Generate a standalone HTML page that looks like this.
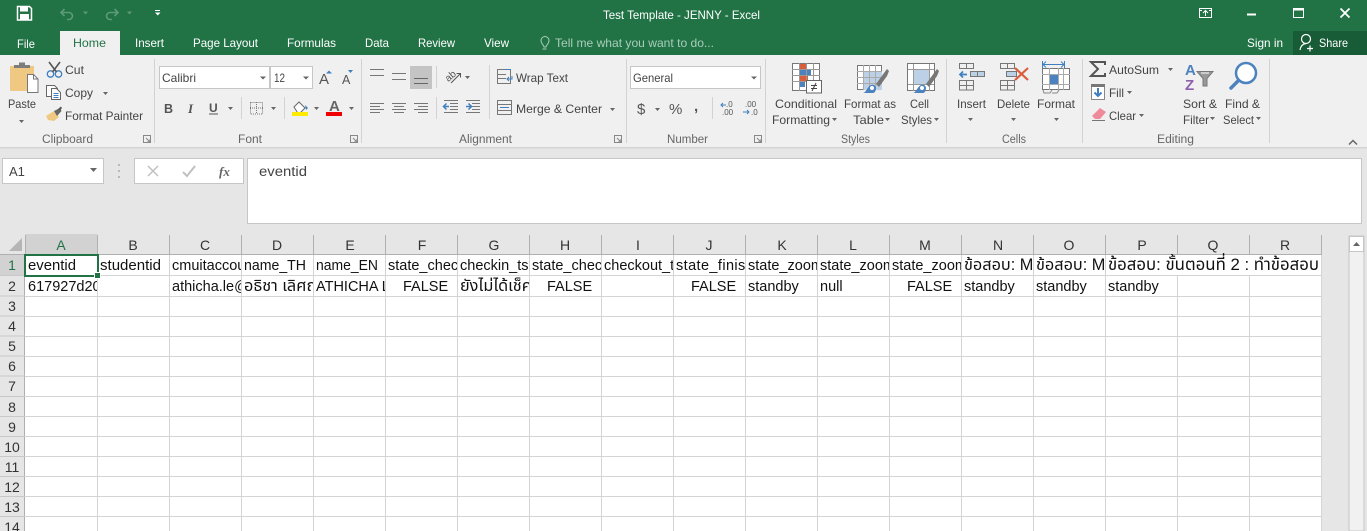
<!DOCTYPE html>
<html><head><meta charset="utf-8"><title>Test Template - JENNY - Excel</title>
<style>
html,body{margin:0;padding:0;width:1367px;height:531px;overflow:hidden;background:#fff}
svg{display:block}
text{font-family:"Liberation Sans","Noto Sans Thai","Noto Sans CJK SC","DejaVu Sans",sans-serif;font-size:12px;fill:#444}
.w text{fill:#fff}
.g text{fill:#666;font-size:11.5px}
.c text{fill:#111;font-size:14.5px}
.c text.t{font-size:16.3px}
.h text{fill:#333;font-size:14px}
.m{fill:#666}
.b{fill:none;stroke:#666;stroke-width:1}
.bl{fill:none;stroke:#888;stroke-width:1.5}
</style></head><body>
<svg width="1367" height="531" viewBox="0 0 1367 531" xmlns="http://www.w3.org/2000/svg">
<!-- backgrounds -->
<rect width="1367" height="531" fill="#e6e6e6"/>
<rect width="1367" height="55" fill="#217346"/>
<rect x="1293" y="31" width="74" height="24" fill="#185c37"/>
<rect x="60" y="31" width="60" height="24" fill="#f0f0f0"/>
<rect y="55" width="1367" height="92" fill="#f0f0f0"/>
<rect y="147" width="1367" height="1.5" fill="#d4d4d4"/>
<!-- title bar icons -->
<path d="M17.500 6.500h12l2 2v11.500h-14z" fill="none" stroke="#fff" stroke-width="1.500"/>
<rect x="20" y="7" width="8" height="4.500" fill="#fff"/><rect x="20" y="14" width="9" height="6" fill="#fff"/>
<path d="M61.500 12.500h7.500a3.500 3.500 0 0 1 0 7h-2M64.500 9l-3.500 3.500 3.500 3.500" fill="none" stroke="#5d9a78" stroke-width="1.600"/>
<path d="M117.500 12.500h-7.500a3.500 3.500 0 0 0 0 7h2M114.500 9l3.500 3.500-3.500 3.500" fill="none" stroke="#5d9a78" stroke-width="1.600"/>
<path d="M83 11.500h5l-2.500 3zM127 11.500h5l-2.500 3z" fill="#5d9a78"/>
<path d="M155 10h5v1h-5zM155 12.500h5.500l-2.750 3z" fill="#fff"/>
<rect x="1199.500" y="8.500" width="12" height="9" fill="none" stroke="#fff"/><path d="M1205.500 16v-5M1203 13l2.500-2.500 2.500 2.500M1200 10.500h2M1209 10.500h2" fill="none" stroke="#fff"/>
<rect x="1247" y="13.500" width="9" height="2" fill="#fff"/>
<rect x="1293.500" y="8.500" width="10" height="9" fill="none" stroke="#fff"/><rect x="1293" y="8" width="11" height="2.500" fill="#fff"/>
<path d="M1340.500 8.500l9 9M1349.500 8.500l-9 9" stroke="#fff" stroke-width="1.800"/>
<circle cx="1306" cy="39" r="4.500" fill="none" stroke="#fff" stroke-width="1.200"/><path d="M1300 50c.5-4 3-6 6-6.500M1307 48.500h6M1310 45.500v6" fill="none" stroke="#fff" stroke-width="1.200"/>
<!-- title text -->
<g class="w">
<text x="603" y="19" textLength="157" lengthAdjust="spacingAndGlyphs">Test Template - JENNY - Excel</text>
<text x="17" y="48" textLength="18" lengthAdjust="spacingAndGlyphs">File</text>
<text x="135" y="47" textLength="29" lengthAdjust="spacingAndGlyphs">Insert</text>
<text x="193" y="47" textLength="65" lengthAdjust="spacingAndGlyphs">Page Layout</text>
<text x="287" y="47" textLength="49" lengthAdjust="spacingAndGlyphs">Formulas</text>
<text x="365" y="47" textLength="24" lengthAdjust="spacingAndGlyphs">Data</text>
<text x="418" y="47" textLength="37" lengthAdjust="spacingAndGlyphs">Review</text>
<text x="484" y="47" textLength="25" lengthAdjust="spacingAndGlyphs">View</text>
<text x="1247" y="47" textLength="36" lengthAdjust="spacingAndGlyphs">Sign in</text>
<text x="1319" y="47" textLength="29" lengthAdjust="spacingAndGlyphs">Share</text>
</g>
<text x="73" y="47" textLength="33" lengthAdjust="spacingAndGlyphs" style="fill:#217346">Home</text>
<text x="555" y="47" textLength="159" lengthAdjust="spacingAndGlyphs" style="fill:#a9cdb8">Tell me what you want to do...</text>
<path d="M544 47c0-2-3-3-3-6.500a4 4 0 0 1 8 0c0 3.500-3 4.500-3 6.500zM542.500 49h4" fill="none" stroke="#a9cdb8"/>
<!-- group separators -->
<g fill="#d2d2d2"><rect x="154" y="59" width="1" height="84"/><rect x="361" y="59" width="1" height="84"/><rect x="626" y="59" width="1" height="84"/><rect x="765" y="59" width="1" height="84"/><rect x="946" y="59" width="1" height="84"/><rect x="1082" y="59" width="1" height="84"/><rect x="1269" y="59" width="1" height="84"/>
<rect x="241" y="97" width="1" height="22"/><rect x="284" y="97" width="1" height="22"/><rect x="436" y="66" width="1" height="22"/><rect x="436" y="97" width="1" height="22"/><rect x="489" y="65" width="1" height="54"/><rect x="712" y="97" width="1" height="22"/></g>
<!-- clipboard -->
<path d="M11 66h23v9h-7v16H11a1 1 0 0 1-1-1V67a1 1 0 0 1 1-1z" fill="#efc981"/>
<path d="M14 68v-3h5v-2.500h6V65h5v3z" fill="#7d7d7d"/>
<path d="M27.500 74.500h6l4.500 4.500v13.500H27.500z" fill="#fff" stroke="#777"/>
<path d="M33.500 74.500V79H38" fill="none" stroke="#777"/>
<path d="M19 120h5l-2.500 3z" class="m"/>
<circle cx="50.500" cy="74" r="3.200" fill="none" stroke="#3f7fbf" stroke-width="1.300"/><circle cx="58.500" cy="74" r="3.200" fill="none" stroke="#3f7fbf" stroke-width="1.300"/>
<path d="M49 62l7.500 10M60 62l-7.500 10" stroke="#555" stroke-width="1.600"/>
<path d="M46.500 85.500h8l3 3v8H46.500z" fill="#fff" stroke="#666"/>
<path d="M51.500 88.500h5l4 4v7h-9z" fill="#fff" stroke="#666"/>
<path d="M53.500 93.500h5M53.500 95.500h5M53.500 97.500h5" stroke="#3f7fbf"/>
<path d="M103 92h5l-2.500 3z" class="m"/>
<path d="M46 116l8-5 5 6-5 4-6-1z" fill="#efc981"/>
<path d="M54 111l6-3 1.500 3-4.500 5z" fill="#666"/><path d="M58 109l3-2.500 1 1.500-2 2.500z" fill="#555"/>
<!-- font -->
<rect x="159.500" y="66.500" width="110" height="22" fill="#fff" stroke="#c6c6c6"/>
<rect x="270.500" y="66.500" width="42" height="22" fill="#fff" stroke="#c6c6c6"/>
<path d="M260 76.500h6l-3 3zM303 76.500h6l-3 3z" class="m"/>
<text x="319" y="84" style="font-size:15px;fill:#555">A</text><path d="M326 73.500l3-3 3 3z" fill="#3f7fbf"/>
<text x="342" y="84" style="font-size:12.500px;fill:#555">A</text><path d="M348 70h5l-2.500 3z" fill="#3f7fbf"/>
<text x="164" y="113" style="font-weight:bold;font-size:12.500px;fill:#555">B</text>
<text x="188" y="113" style="font-style:italic;font-family:'Liberation Serif',serif;font-weight:bold;font-size:13px;fill:#555">I</text>
<text x="209" y="112" style="font-weight:bold;font-size:12px;fill:#555">U</text><rect x="209" y="113.500" width="9" height="1" fill="#555"/>
<path d="M228 107h5l-2.500 3zM271 107h5l-2.500 3zM314 107h5l-2.500 3zM349 107h5l-2.500 3z" class="m"/>
<rect x="250.500" y="102.500" width="12" height="11.500" fill="none" stroke="#777" stroke-dasharray="1 1"/><path d="M256.500 102v12M250 108h13" stroke="#777" stroke-dasharray="1 1"/>
<path d="M294 107l5-5 6 6-4.500 4.500h-3z" fill="#fff" stroke="#666"/><path d="M305 105l3 3-2 2z" fill="#3f7fbf"/>
<rect x="292" y="112" width="16" height="4" fill="#ffeb00"/>
<text x="329" y="111" style="font-size:15px;font-weight:bold;fill:#666">A</text>
<rect x="326" y="112" width="16" height="4" fill="#f00000"/>
<!-- alignment -->
<g stroke="#777" stroke-width="1" fill="none">
<path d="M370 69.500h14M370 75.500h14"/><path d="M392 73.500h14M392 79.500h14"/>
<path d="M370 103.500h14M370 106.500h10M370 109.500h14M370 112.500h10"/>
<path d="M392 103.500h14M394 106.500h10M392 109.500h14M394 112.500h10"/>
<path d="M414 103.500h14M418 106.500h10M414 109.500h14M418 112.500h10"/>
<path d="M444 100.500h14M450 103.500h8M450 106.500h8M450 109.500h8M444 112.500h14"/>
<path d="M466 100.500h14M472 103.500h8M472 106.500h8M472 109.500h8M466 112.500h14"/>
</g>
<rect x="410" y="66" width="22" height="23" fill="#c4c4c4"/>
<path d="M414 78.500h14M414 83.500h14" stroke="#666" fill="none"/>
<path d="M444 106.500h5M446.500 103.500l-3 3 3 3M466 106.500h5M468.500 103.500l3 3-3 3" fill="none" stroke="#3f7fbf" stroke-width="1.500"/>
<text x="446" y="80" transform="rotate(-40 450 78)" style="font-size:10px;fill:#555">ab</text>
<path d="M451 83l9-9M456.500 73.500h4v4" fill="none" stroke="#555"/>
<path d="M465 76h5l-2.500 3zM610 108h5l-2.500 3z" class="m"/>
<rect x="497.500" y="69.500" width="13" height="14" fill="none" stroke="#777"/><path d="M498 74.500h8M498 78.500h8" stroke="#777"/><path d="M505 69.500h6M512 76v3h-5M509 77l-2 2 2 2" fill="none" stroke="#3f7fbf"/>
<rect x="497.500" y="100.500" width="14" height="14" fill="none" stroke="#777"/><path d="M498 104.500h14M498 110.500h14" stroke="#777"/><path d="M500 107.500h9" stroke="#3f7fbf"/>
<!-- number -->
<rect x="630.500" y="66.500" width="130" height="22" fill="#fff" stroke="#c6c6c6"/>
<path d="M751 76.500h6l-3 3z" class="m"/>
<path d="M655 108h5l-2.500 3z" class="m"/>
<text x="637" y="114" style="font-size:15px;fill:#555">$</text>
<text x="669" y="114" style="font-size:15px;fill:#555">%</text>
<text x="694" y="111" style="font-size:15px;font-weight:bold;fill:#555">,</text>
<text x="726" y="107" style="font-size:8px;fill:#555">.0</text><text x="722" y="115" style="font-size:8px;fill:#555">.00</text>
<path d="M721 105h5M723 103l-2 2 2 2" fill="none" stroke="#3f7fbf"/>
<text x="745" y="107" style="font-size:8px;fill:#555">.00</text><text x="751" y="115" style="font-size:8px;fill:#555">.0</text>
<path d="M743 112h6M747 110l2 2-2 2" fill="none" stroke="#3f7fbf"/>
<!-- conditional formatting -->
<rect x="792.500" y="63.500" width="27" height="27" fill="#fff" stroke="#777"/>
<rect x="800" y="64" width="6" height="5" fill="#d95f3c"/><rect x="800" y="70" width="11" height="5" fill="#4c82bd"/><rect x="800" y="76" width="8" height="5" fill="#d95f3c"/><rect x="800" y="82" width="5" height="5" fill="#4c82bd"/>
<path d="M792 69.500h28M792 75.500h28M792 81.500h28M799.500 63v28M806.500 63v28M813.500 63v28" stroke="#999" fill="none"/>
<rect x="806.500" y="80.500" width="15" height="12.500" fill="#fff" stroke="#666"/>
<path d="M811 85.500h6M811 88.500h6M816 83l-4 8" stroke="#444" fill="none"/>
<!-- format as table -->
<rect x="857.500" y="65.500" width="24" height="24" fill="#fff" stroke="#777"/>
<rect x="863" y="71" width="19" height="19" fill="#bcd0e6"/>
<path d="M857 71.500h25M857 77.500h25M857 83.500h25M863.500 65v25M869.500 65v25M875.500 65v25" stroke="#aaa" fill="none"/>
<path d="M876 84l8-11 3-4 2 2-2 5-8 11z" fill="#777"/>
<path d="M863 93c3 0 4-6 8-8 3-1 5 1 5 3 0 2-1 5-3 5z" fill="#4c82bd"/><circle cx="872" cy="88" r="2" fill="#fff"/>
<!-- cell styles -->
<rect x="907.500" y="63.500" width="27" height="27" fill="#fff" stroke="#777"/>
<rect x="913" y="69" width="16" height="15" fill="#bcd0e6"/>
<path d="M908 69.500h26M908 84.500h26M913.500 64v27M929.500 64v27" stroke="#999" fill="none"/>
<path d="M926 84l8-11 3-4 2 2-2 5-8 11z" fill="#777"/>
<path d="M913 93c3 0 4-6 8-8 3-1 5 1 5 3 0 2-1 5-3 5z" fill="#4c82bd"/><circle cx="922" cy="88" r="2" fill="#fff"/>
<!-- insert -->
<g fill="none" stroke="#777"><rect x="959.500" y="63.500" width="14" height="5"/><path d="M966.500 63.500v5"/><rect x="959.500" y="80.500" width="14" height="9.500"/><path d="M959 85.500h15M966.500 80v10"/></g>
<rect x="970.500" y="71.500" width="14" height="5" fill="#bcd0e6" stroke="#777"/><path d="M977.500 71v6" stroke="#777"/>
<path d="M960 74.500h7M963 71.500l-3 3 3 3" fill="none" stroke="#3f7fbf" stroke-width="1.700"/>
<!-- delete -->
<g fill="none" stroke="#777"><rect x="1000.500" y="63.500" width="14" height="5"/><path d="M1007.500 63.500v5"/><rect x="1000.500" y="80.500" width="14" height="9.500"/><path d="M1000 85.500h15M1007.500 80v10"/></g>
<rect x="1006.500" y="71.500" width="10" height="5" fill="#bcd0e6" stroke="#777"/>
<path d="M1015 68l13 12M1028 68l-13 12" stroke="#d95f3c" stroke-width="2.200"/>
<!-- format -->
<path d="M1043 64.500h21M1046 61.500l-3 3 3 3M1061 61.500l3 3-3 3" fill="none" stroke="#3f7fbf"/><path d="M1042.500 61v7M1064.500 61v7" stroke="#3f7fbf"/>
<rect x="1042.500" y="68.500" width="27" height="21" fill="#fff" stroke="#777"/>
<rect x="1050" y="74" width="8" height="10" fill="#4c82bd"/>
<path d="M1042 74.500h28M1042 84.500h28M1049.500 68v22M1058.500 68v22M1063.500 68v22" stroke="#aaa" fill="none"/>
<path d="M1043 90l1 3h6l2-3M1052 93h5l2-3" stroke="#888" fill="none"/>
<path d="M968 118h5l-2.500 3zM1011 118h5l-2.500 3zM1054 118h5l-2.500 3zM832 118h5l-2.500 3zM885 118h5l-2.500 3zM934 118h5l-2.500 3z" class="m"/>
<!-- editing -->
<path d="M1105 65v-3h-14l7 7-7 7h14v-3" fill="none" stroke="#555" stroke-width="2"/>
<rect x="1091.500" y="84.500" width="13" height="15" fill="#fff" stroke="#888"/><rect x="1091" y="84" width="14" height="3" fill="#777"/>
<path d="M1098 88v8M1094.500 92.500l3.500 3.500 3.500-3.500" fill="none" stroke="#3f7fbf" stroke-width="2"/>
<path d="M1092 116l8-8 6 4-6 7h-5z" fill="#ee8a9a"/><path d="M1092 120.500h13" stroke="#777"/>
<path d="M1168 68h5l-2.500 3zM1127 91h5l-2.500 3zM1139 114h5l-2.500 3zM1210 117h5l-2.500 3zM1256 117h5l-2.500 3z" class="m"/>
<text x="1185" y="75" style="font-size:15px;font-weight:bold;fill:#4c82bd">A</text>
<text x="1185" y="90" style="font-size:15px;font-weight:bold;fill:#8f5fae">Z</text>
<path d="M1197 71.500h16l-6 7v7.500h-4v-7.500z" fill="#999" stroke="#777"/><path d="M1201 73h8" stroke="#fff"/>
<circle cx="1246" cy="73" r="10" fill="#fff" stroke="#4c82bd" stroke-width="2.500"/>
<path d="M1238.500 80.500l-7.500 7.500" stroke="#4c82bd" stroke-width="3.500" stroke-linecap="round"/>
<path d="M1349 144.500l4-4 4 4" fill="none" stroke="#666" stroke-width="1.500"/>
<!-- launchers -->
<g fill="none" stroke="#888"><path d="M143.500 135.500h7v7h-7z"/><path d="M146 138l4 4M150 139v3h-3"/><path d="M350.500 135.500h7v7h-7z"/><path d="M353 138l4 4M357 139v3h-3"/><path d="M614.500 135.500h7v7h-7z"/><path d="M617 138l4 4M621 139v3h-3"/><path d="M754.500 135.500h7v7h-7z"/><path d="M757 138l4 4M761 139v3h-3"/></g>
<!-- ribbon text -->
<text x="8" y="108" textLength="28" lengthAdjust="spacingAndGlyphs">Paste</text>
<text x="65" y="74" textLength="19" lengthAdjust="spacingAndGlyphs">Cut</text>
<text x="65" y="97" textLength="28" lengthAdjust="spacingAndGlyphs">Copy</text>
<text x="65" y="120" textLength="78" lengthAdjust="spacingAndGlyphs">Format Painter</text>
<text x="162" y="82" textLength="34" lengthAdjust="spacingAndGlyphs">Calibri</text>
<text x="274" y="82" textLength="11" lengthAdjust="spacingAndGlyphs">12</text>
<text x="516" y="82" textLength="52" lengthAdjust="spacingAndGlyphs">Wrap Text</text>
<text x="516" y="113" textLength="86" lengthAdjust="spacingAndGlyphs">Merge &amp; Center</text>
<text x="633" y="82" textLength="40" lengthAdjust="spacingAndGlyphs">General</text>
<text x="775" y="108" textLength="62" lengthAdjust="spacingAndGlyphs">Conditional</text>
<text x="772" y="124" textLength="58" lengthAdjust="spacingAndGlyphs">Formatting</text>
<text x="844" y="108" textLength="52" lengthAdjust="spacingAndGlyphs">Format as</text>
<text x="853" y="124" textLength="31" lengthAdjust="spacingAndGlyphs">Table</text>
<text x="910" y="108" textLength="19" lengthAdjust="spacingAndGlyphs">Cell</text>
<text x="901" y="124" textLength="31" lengthAdjust="spacingAndGlyphs">Styles</text>
<text x="957" y="108" textLength="29" lengthAdjust="spacingAndGlyphs">Insert</text>
<text x="997" y="108" textLength="33" lengthAdjust="spacingAndGlyphs">Delete</text>
<text x="1037" y="108" textLength="38" lengthAdjust="spacingAndGlyphs">Format</text>
<text x="1109" y="74" textLength="50" lengthAdjust="spacingAndGlyphs">AutoSum</text>
<text x="1109" y="97" textLength="15" lengthAdjust="spacingAndGlyphs">Fill</text>
<text x="1109" y="120" textLength="27" lengthAdjust="spacingAndGlyphs">Clear</text>
<text x="1183" y="108" textLength="34" lengthAdjust="spacingAndGlyphs">Sort &amp;</text>
<text x="1183" y="124" textLength="26" lengthAdjust="spacingAndGlyphs">Filter</text>
<text x="1225" y="108" textLength="35" lengthAdjust="spacingAndGlyphs">Find &amp;</text>
<text x="1223" y="124" textLength="31" lengthAdjust="spacingAndGlyphs">Select</text>
<g class="g">
<text x="42" y="143" textLength="51" lengthAdjust="spacingAndGlyphs">Clipboard</text>
<text x="238" y="143" textLength="24" lengthAdjust="spacingAndGlyphs">Font</text>
<text x="459" y="143" textLength="53" lengthAdjust="spacingAndGlyphs">Alignment</text>
<text x="667" y="143" textLength="41" lengthAdjust="spacingAndGlyphs">Number</text>
<text x="841" y="143" textLength="29" lengthAdjust="spacingAndGlyphs">Styles</text>
<text x="1002" y="143" textLength="24" lengthAdjust="spacingAndGlyphs">Cells</text>
<text x="1157" y="143" textLength="37" lengthAdjust="spacingAndGlyphs">Editing</text>
</g>
<!-- formula bar -->
<rect x="2.500" y="158.500" width="101" height="25" fill="#fff" stroke="#c6c6c6"/>
<text x="9" y="176" style="font-size:13px">A1</text>
<path d="M90 168h7l-3.500 4z" class="m"/>
<path d="M119 164v2M119 170v2M119 176v2" stroke="#aaa" stroke-width="1.500"/>
<rect x="134.500" y="158.500" width="109" height="25" fill="#fff" stroke="#c6c6c6"/>
<path d="M148 166l10 10M158 166l-10 10" stroke="#c0c0c0" stroke-width="1.500"/>
<path d="M183 172l4 4 8-10" fill="none" stroke="#c0c0c0" stroke-width="2"/>
<text x="219" y="176" style="font-family:'Liberation Serif',serif;font-style:italic;font-weight:bold;font-size:13px;fill:#666">fx</text>
<rect x="247.500" y="158.500" width="1114" height="65" fill="#fff" stroke="#c6c6c6"/>
<text x="259" y="176" textLength="48" lengthAdjust="spacingAndGlyphs" style="font-size:13.500px">eventid</text>
<!-- sheet -->
<rect x="25" y="255" width="1296" height="276" fill="#fff"/>
<rect x="25" y="234" width="72" height="21" fill="#d2d2d2"/>
<rect x="0" y="255" width="25" height="21" fill="#d2d2d2"/>
<path d="M22 238v13H9z" fill="#b5b5b5"/>
<g stroke="#b0b0b0">
<path d="M25.500 235v20M97.500 235v20M169.500 235v20M241.500 235v20M313.500 235v20M385.500 235v20M457.500 235v20M529.500 235v20M601.500 235v20M673.500 235v20M745.500 235v20M817.500 235v20M889.500 235v20M961.500 235v20M1033.500 235v20M1105.500 235v20M1177.500 235v20M1249.500 235v20M1321.500 235v20"/>
<path d="M0 254.500h1322"/><path d="M24.500 255v276"/>
<path d="M0 275.500h25M0 296h25M0 316h25M0 336h25M0 356h25M0 376h25M0 396.500h25M0 416.500h25M0 436.500h25M0 456.500h25M0 476.500h25M0 496.500h25M0 516.500h25" stroke="#c8c8c8"/>
</g>
<g stroke="#d4d4d4">
<path d="M97.500 255v276M169.500 255v276M241.500 255v276M313.500 255v276M385.500 255v276M457.500 255v276M529.500 255v276M601.500 255v276M673.500 255v276M745.500 255v276M817.500 255v276M889.500 255v276M961.500 255v276M1033.500 255v276M1105.500 255v276M1177.500 276v255M1249.500 276v255M1321.500 255v276"/>
<path d="M25 275.500h1297M25 296.500h1297M25 316.500h1297M25 336.500h1297M25 356.500h1297M25 376.500h1297M25 396.500h1297M25 416.500h1297M25 436.500h1297M25 456.500h1297M25 476.500h1297M25 496.500h1297M25 516.500h1297"/>
</g>
<g class="h" text-anchor="middle">
<text x="61" y="250" style="fill:#217346">A</text><text x="133" y="250">B</text><text x="205" y="250">C</text><text x="277" y="250">D</text><text x="350" y="250">E</text><text x="422" y="250">F</text><text x="494" y="250">G</text><text x="565" y="250">H</text><text x="638" y="250">I</text><text x="709" y="250">J</text><text x="782" y="250">K</text><text x="853" y="250">L</text><text x="925" y="250">M</text><text x="998" y="250">N</text><text x="1069" y="250">O</text><text x="1142" y="250">P</text><text x="1213" y="250">Q</text><text x="1285" y="250">R</text>
<text x="12" y="270" style="fill:#217346">1</text><text x="12" y="291">2</text><text x="12" y="311">3</text><text x="12" y="331">4</text><text x="12" y="351">5</text><text x="12" y="371">6</text><text x="12" y="391">7</text><text x="12" y="412">8</text><text x="12" y="432">9</text><text x="12" y="452">10</text><text x="12" y="472">11</text><text x="12" y="492">12</text><text x="12" y="512">13</text><text x="12" y="532">14</text>
</g>
<g class="c">
<text x="28" y="270" textLength="48" lengthAdjust="spacingAndGlyphs">eventid</text>
<text x="100" y="270" textLength="61" lengthAdjust="spacingAndGlyphs">studentid</text>
<svg x="170" y="256" width="71" height="20"><text x="2" y="14">cmuitaccount</text></svg>
<svg x="242" y="256" width="71" height="20"><text x="2" y="14" textLength="62" lengthAdjust="spacingAndGlyphs">name_TH</text></svg>
<svg x="314" y="256" width="71" height="20"><text x="2" y="14" textLength="62" lengthAdjust="spacingAndGlyphs">name_EN</text></svg>
<svg x="386" y="256" width="71" height="20"><text x="2" y="14">state_checkin</text></svg>
<svg x="458" y="256" width="71" height="20"><text x="2" y="14">checkin_ts</text></svg>
<svg x="530" y="256" width="71" height="20"><text x="2" y="14">state_checkout</text></svg>
<svg x="602" y="256" width="71" height="20"><text x="2" y="14">checkout_ts</text></svg>
<svg x="674" y="256" width="71" height="20"><text x="2" y="14" style="letter-spacing:.4px">state_finish</text></svg>
<svg x="746" y="256" width="71" height="20"><text x="2" y="14">state_zoom</text></svg>
<svg x="818" y="256" width="71" height="20"><text x="2" y="14">state_zoom</text></svg>
<svg x="890" y="256" width="71" height="20"><text x="2" y="14">state_zoom</text></svg>
<svg x="962" y="256" width="71" height="20"><text class="t" x="2" y="14">ข้อสอบ: MCQ</text></svg>
<svg x="1034" y="256" width="71" height="20"><text class="t" x="2" y="14">ข้อสอบ: MCQ</text></svg>
<text class="t" x="1108" y="270" style="font-size:16.8px">ข้อสอบ: ขั้นตอนที่ 2 : ทำข้อสอบ</text>
<svg x="26" y="277" width="71" height="20"><text x="2" y="14">617927d20c3a</text></svg>
<svg x="170" y="277" width="71" height="20"><text x="2" y="14">athicha.le@cmu</text></svg>
<svg x="242" y="277" width="71" height="20"><text class="t" x="2" y="14">อธิชา เลิศฤทธิ์</text></svg>
<svg x="314" y="277" width="71" height="20"><text x="2" y="14">ATHICHA LERT</text></svg>
<text x="403" y="291">FALSE</text>
<svg x="458" y="277" width="71" height="20"><text class="t" x="2" y="14">ยังไม่ได้เช็คอิน</text></svg>
<text x="547" y="291">FALSE</text>
<text x="691" y="291">FALSE</text>
<text x="748" y="291">standby</text>
<text x="820" y="291">null</text>
<text x="907" y="291">FALSE</text>
<text x="964" y="291">standby</text>
<text x="1036" y="291">standby</text>
<text x="1108" y="291">standby</text>
</g>
<!-- selection -->
<rect x="25" y="255" width="73" height="21" fill="none" stroke="#217346" stroke-width="2"/>
<rect x="94.500" y="272.500" width="6" height="6" fill="#217346" stroke="#fff" stroke-width="1"/>
<!-- scrollbar -->
<rect x="1349" y="236" width="15" height="295" fill="#f1f1f1" stroke="#c6c6c6"/>
<rect x="1349.500" y="236.500" width="14" height="15" fill="#fff" stroke="#c6c6c6"/>
<path d="M1353 246l3.500-4 3.500 4z" fill="#666"/>
</svg>
</body></html>
